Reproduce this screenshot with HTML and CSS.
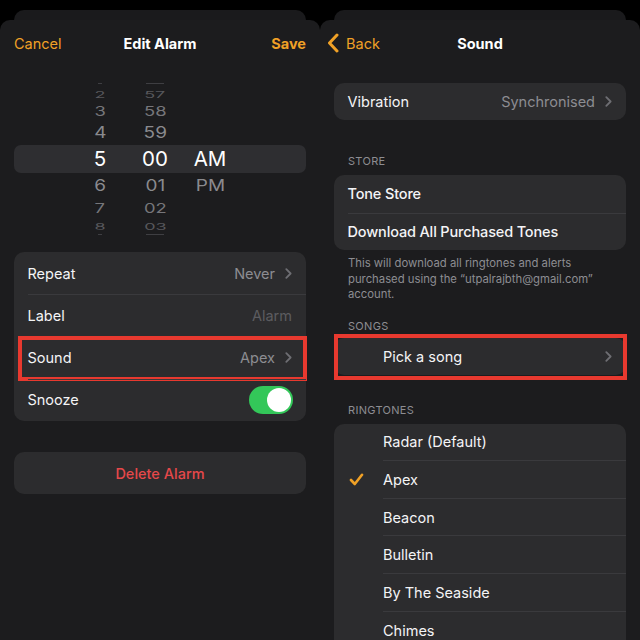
FILE: index.html
```html
<!DOCTYPE html>
<html lang="en">
<head>
<meta charset="utf-8">
<title>Edit Alarm / Sound</title>
<link rel="stylesheet" href="styles.css">
</head>
<body>
<div class="screen">
  <section class="panel">
    <div class="stack-card"></div>
    <div class="sheet">
      <header class="nav">
        <span class="nav-left accent">Cancel</span>
        <span class="nav-title">Edit Alarm</span>
        <span class="nav-right accent strong">Save</span>
      </header>

      <div class="picker">
        <div class="prow r0"><span class="sliver"></span><span class="sliver wide"></span><span></span></div>
        <div class="prow r1"><span>2</span><span>57</span><span></span></div>
        <div class="prow r2"><span>3</span><span>58</span><span></span></div>
        <div class="prow r3"><span>4</span><span>59</span><span></span></div>
        <div class="prow sel"><span>5</span><span>00</span><span>AM</span></div>
        <div class="prow r3"><span>6</span><span>01</span><span>PM</span></div>
        <div class="prow r2"><span>7</span><span>02</span><span></span></div>
        <div class="prow r1"><span>8</span><span>03</span><span></span></div>
        <div class="prow r0"><span class="sliver"></span><span class="sliver wide"></span><span></span></div>
      </div>

      <div class="group settings">
        <div class="row">
          <span class="label">Repeat</span>
          <span class="value">Never</span>
          <svg class="chev" width="7" height="11" viewBox="0 0 7 11"><path d="M1.3 1.2 L5.6 5.5 L1.3 9.8"/></svg>
        </div>
        <div class="row">
          <span class="label">Label</span>
          <span class="value placeholder">Alarm</span>
        </div>
        <div class="row marked">
          <span class="label">Sound</span>
          <span class="value">Apex</span>
          <svg class="chev" width="7" height="11" viewBox="0 0 7 11"><path d="M1.3 1.2 L5.6 5.5 L1.3 9.8"/></svg>
        </div>
        <div class="row">
          <span class="label">Snooze</span>
          <span class="switch"><span class="knob"></span></span>
        </div>
      </div>

      <div class="group delete">Delete Alarm</div>
    </div>
  </section>

  <section class="panel">
    <div class="stack-card"></div>
    <div class="sheet">
      <header class="nav">
        <span class="nav-left accent back">
          <svg width="12" height="20" viewBox="0 0 12 20"><path d="M10 2 L2.5 10 L10 18"/></svg>
          Back
        </span>
        <span class="nav-title">Sound</span>
        <span class="nav-right"></span>
      </header>

      <div class="group vib">
        <div class="row r-sm">
          <span class="label">Vibration</span>
          <span class="value">Synchronised</span>
          <svg class="chev" width="7" height="11" viewBox="0 0 7 11"><path d="M1.3 1.2 L5.6 5.5 L1.3 9.8"/></svg>
        </div>
      </div>

      <div class="sec-head store-head">STORE</div>
      <div class="group">
        <div class="row r-sm"><span class="label accent medium">Tone Store</span></div>
        <div class="row r-sm"><span class="label accent medium">Download All Purchased Tones</span></div>
      </div>
      <p class="footnote">This will download all ringtones and alerts purchased using the “utpalrajbth@gmail.com” account.</p>

      <div class="sec-head songs-head">SONGS</div>
      <div class="group marked-card">
        <div class="trow single">
          <span class="tcheck"></span>
          <span class="tlabel">Pick a song
            <svg class="chev" width="7" height="11" viewBox="0 0 7 11"><path d="M1.3 1.2 L5.6 5.5 L1.3 9.8"/></svg>
          </span>
        </div>
      </div>

      <div class="sec-head ring-head">RINGTONES</div>
      <div class="group tones">
        <div class="trow"><span class="tcheck"></span><span class="tlabel">Radar (Default)</span></div>
        <div class="trow"><span class="tcheck"><svg width="15" height="13" viewBox="0 0 15 13"><path d="M2 7 L5.8 11 L13 1.8"/></svg></span><span class="tlabel">Apex</span></div>
        <div class="trow"><span class="tcheck"></span><span class="tlabel">Beacon</span></div>
        <div class="trow"><span class="tcheck"></span><span class="tlabel">Bulletin</span></div>
        <div class="trow"><span class="tcheck"></span><span class="tlabel">By The Seaside</span></div>
        <div class="trow"><span class="tcheck"></span><span class="tlabel">Chimes</span></div>
      </div>
    </div>
  </section>
</div>
</body>
</html>
```

FILE: styles.css
```css
* { box-sizing: border-box; }
html, body { margin: 0; padding: 0; }
body {
  background: #000;
  font-family: Inter, "Noto Sans", "Liberation Sans", sans-serif;
  color: #f4f4f6;
  width: 640px;
  height: 640px;
  overflow: hidden;
}
.screen {
  display: flex;
  width: 640px;
  height: 640px;
}
.panel {
  width: 320px;
  height: 640px;
  display: flex;
  flex-direction: column;
  padding-top: 10px;
}
.stack-card {
  height: 10px;
  flex: none;
  margin: 0 14px;
  background: #1a1a1c;
  border-radius: 10px 10px 0 0;
}
.sheet {
  flex: 1;
  min-height: 0;
  background: #1c1c1e;
  border-radius: 10px 10px 0 0;
  overflow: hidden;
  display: flex;
  flex-direction: column;
}
.sheet > * { flex-shrink: 0; }
.nav {
  height: 46px;
  display: grid;
  grid-template-columns: 1fr auto 1fr;
  align-items: center;
  padding: 0 14px;
  font-size: 14.5px;
}
.nav-left { justify-self: start; }
.nav-right { justify-self: end; }
.nav-title { font-weight: 700; color: #fff; }
.accent { color: #f0a126; }
.strong { font-weight: 700; }
.medium { font-weight: 500; letter-spacing: -0.15px; }
.back {
  display: flex;
  align-items: center;
  gap: 7px;
  margin-left: -7px;
}
.back svg path {
  fill: none;
  stroke: #f0a126;
  stroke-width: 3;
  stroke-linecap: round;
  stroke-linejoin: round;
}

/* picker */
.picker {
  margin: 16px 14px 16px;
  display: flex;
  flex-direction: column;
}
.prow {
  display: grid;
  grid-template-columns: 56px 54px 56px;
  padding-left: 58px;
  align-items: center;
  justify-items: center;
  font-size: 20px;
  font-weight: 400;
  text-align: center;
  overflow: hidden;
}
.prow span { display: block; line-height: 1; }
.prow.r0 { height: 3px; }
.sliver {
  width: 4px;
  height: 1px;
  background: #3e3e42;
}
.sliver.wide { width: 18px; }
.prow.r1 { height: 16px; color: #58585c; }
.prow.r1 span { transform: scale(0.9, 0.45); }
.prow.r2 { height: 19px; color: #76767a; }
.prow.r2 span { transform: scale(0.92, 0.65); }
.prow.r3 { height: 25px; color: #8a8a8e; }
.prow.r3 span { transform: scale(0.95, 0.78); }
.prow.sel {
  height: 28px;
  background: #2e2e31;
  border-radius: 7px;
  color: #fff;
  font-size: 20.5px;
}

/* groups */
.group {
  margin: 0 14px;
  background: #2c2c2e;
  border-radius: 10px;
}
.row {
  height: 42.25px;
  display: flex;
  align-items: center;
  gap: 10px;
  padding: 0 14px 0 13.5px;
  font-size: 14.5px;
  position: relative;
}
.settings .row + .row::before,
.group .row.r-sm + .row.r-sm::before {
  content: "";
  position: absolute;
  left: 13.5px;
  right: 0;
  top: 0;
  border-top: 1px solid #3a3a3d;
}
.row.marked::after {
  content: "";
  position: absolute;
  left: 4px;
  right: -1px;
  top: -1px;
  bottom: -2px;
  border: 4px solid #e8392f;
}
.label { flex: 1; color: #f4f4f6; }
.value { color: #8d8d92; }
.value.placeholder { color: #5c5c60; }
.chev path {
  fill: none;
  stroke: #6e6e73;
  stroke-width: 1.8;
  stroke-linecap: round;
  stroke-linejoin: round;
}
.switch {
  width: 44px;
  height: 28px;
  border-radius: 14px;
  background: #33c759;
  display: flex;
  justify-content: flex-end;
  align-items: center;
  padding: 2px;
  margin-right: -1px;
}
.knob {
  width: 24px;
  height: 24px;
  border-radius: 50%;
  background: #fff;
}
.delete {
  margin-top: 31px;
  height: 42px;
  display: flex;
  align-items: center;
  justify-content: center;
  color: #e5484a;
  font-size: 14.5px;
  font-weight: 500;
}

/* right panel */
.vib { margin-top: 17px; }
.row.r-sm { height: 37.5px; }
.vib .row { height: 37px; }
.sec-head {
  margin: 0 14px;
  padding-left: 14px;
  font-size: 11px;
  line-height: 13px;
  color: #8d8d92;
  letter-spacing: 0.3px;
  margin-bottom: 6.5px;
}
.store-head { margin-top: 34.5px; margin-bottom: 7.5px; }
.footnote {
  margin: 6px 28px 0;
  font-size: 11.3px;
  line-height: 15.5px;
  color: #8d8d92;
}
.songs-head { margin-top: 17px; margin-bottom: 5px; }
.marked-card {
  position: relative;
}
.marked-card::after {
  content: "";
  position: absolute;
  left: -0.5px;
  right: -0.5px;
  top: -4px;
  bottom: -5px;
  border: 4px solid #e8392f;
}
.ring-head { margin-top: 29px; }
.trow {
  height: 37.6px;
  display: flex;
  font-size: 14.5px;
}
.tcheck {
  width: 49px;
  flex: none;
  display: flex;
  align-items: center;
  padding-left: 15px;
}
.tcheck path {
  fill: none;
  stroke: #f0a126;
  stroke-width: 2.6;
  stroke-linecap: round;
  stroke-linejoin: round;
}
.tlabel {
  flex: 1;
  display: flex;
  align-items: center;
  justify-content: space-between;
  padding-right: 14px;
  border-bottom: 1px solid #3a3a3d;
  color: #f4f4f6;
}
.trow:last-child .tlabel,
.trow.single .tlabel { border-bottom: none; }
.tones { flex: 1 0 auto; border-radius: 10px 10px 0 0; }
```
